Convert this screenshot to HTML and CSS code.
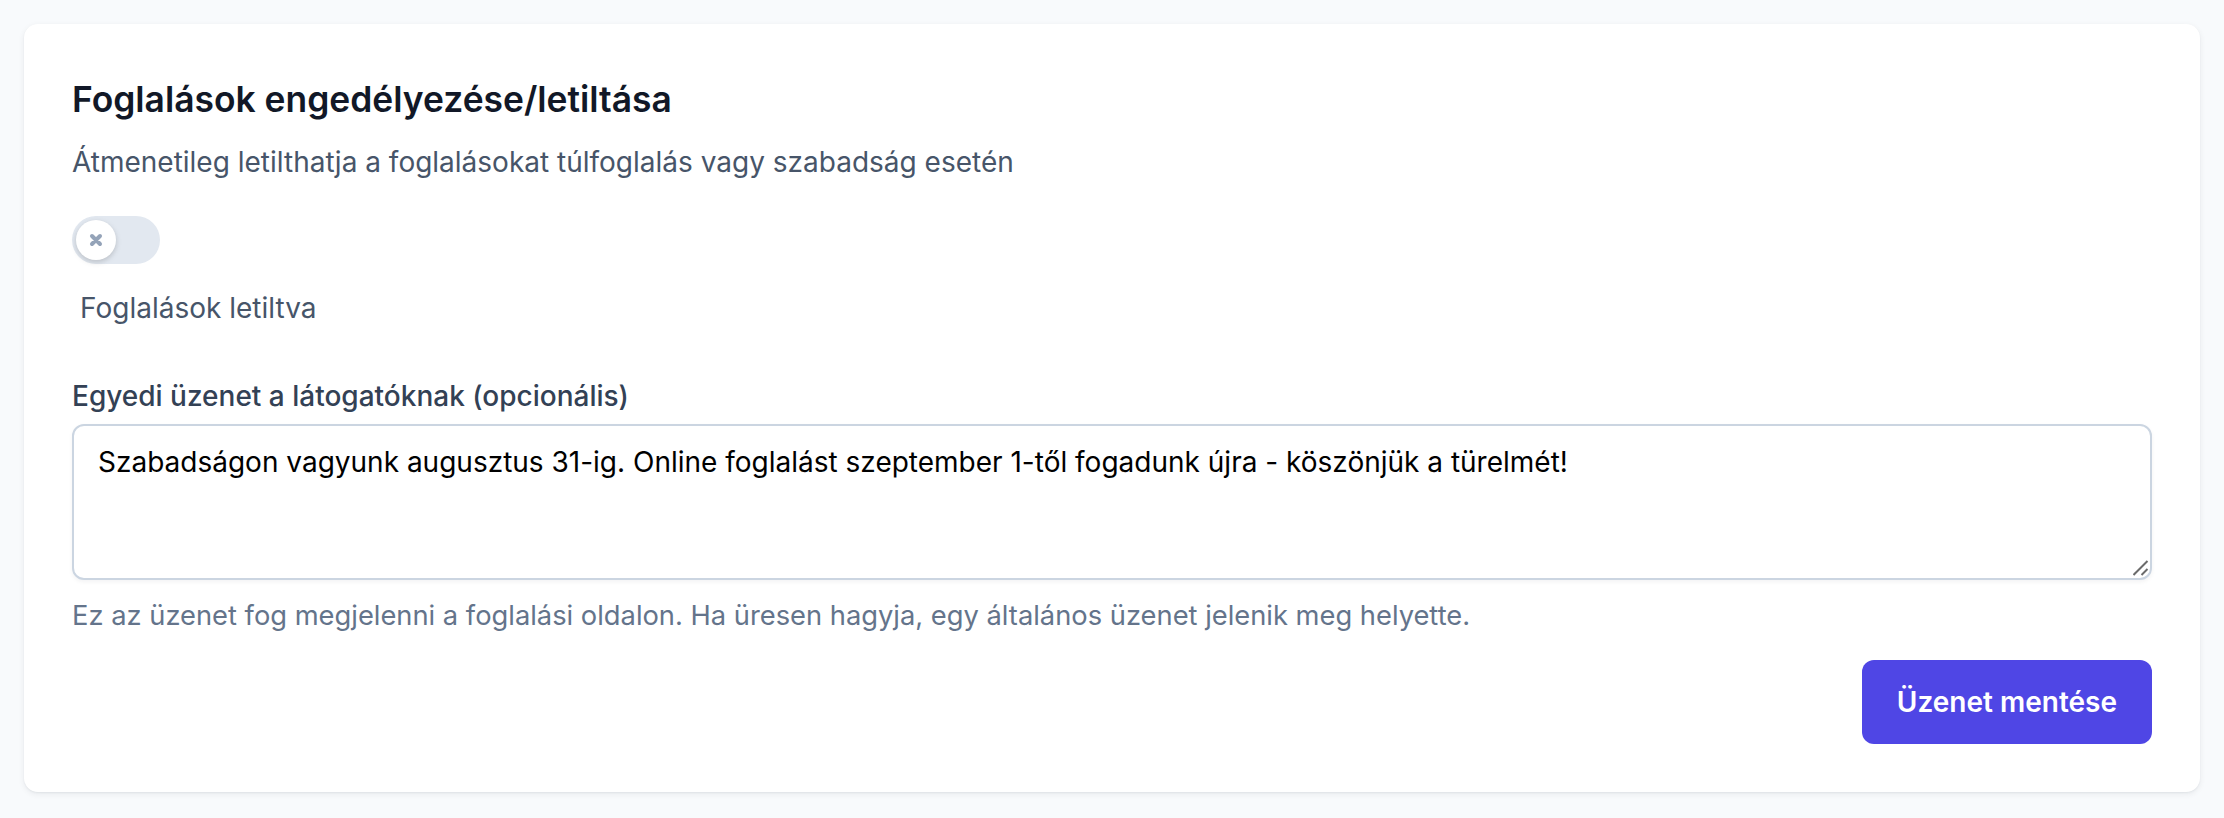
FILE: index.html
```html
<!DOCTYPE html>
<html lang="hu">
<head>
<meta charset="utf-8">
<title>Foglalások engedélyezése/letiltása</title>
<link rel="stylesheet" href="styles.css">
</head>
<body>
<main class="page">
  <section class="card">
    <h2 class="card-title">Foglalások engedélyezése/letiltása</h2>
    <p class="card-desc">Átmenetileg letilthatja a foglalásokat túlfoglalás vagy szabadság esetén</p>

    <div class="toggle-row">
      <button class="toggle" type="button" role="switch" aria-checked="false" aria-label="Foglalások engedélyezése">
        <span class="toggle-knob">
          <svg class="toggle-icon" viewBox="0 0 12 12" fill="none" aria-hidden="true">
            <path d="M4 8l2-2m0 0l2-2M6 6L4 4m2 2l2 2" stroke="currentColor" stroke-width="2" stroke-linecap="round" stroke-linejoin="round"/>
          </svg>
        </span>
      </button>
    </div>
    <p class="toggle-status">Foglalások letiltva</p>

    <div class="field">
      <label class="field-label" for="visitor-message">Egyedi üzenet a látogatóknak (opcionális)</label>
      <div class="textarea-wrap">
        <textarea id="visitor-message" class="field-input" rows="3">Szabadságon vagyunk augusztus 31-ig. Online foglalást szeptember 1-től fogadunk újra - köszönjük a türelmét!</textarea>
        <svg class="resize-grip" viewBox="0 0 16 16" aria-hidden="true">
          <path d="M0.5 15L14.5 1M8.5 15L14.5 9" stroke="#6b6b6b" stroke-width="2" fill="none"/>
        </svg>
      </div>
      <p class="field-help">Ez az üzenet fog megjelenni a foglalási oldalon. Ha üresen hagyja, egy általános üzenet jelenik meg helyette.</p>
    </div>

    <div class="actions">
      <button class="btn-primary" type="button">Üzenet mentése</button>
    </div>
  </section>
</main>
</body>
</html>
```

FILE: styles.css
```css
* {
  box-sizing: border-box;
}

html, body {
  margin: 0;
  padding: 0;
}

body {
  background: #f8fafc;
  font-family: "Inter", "Noto Sans", "Liberation Sans", sans-serif;
  color: #0f172a;
  -webkit-font-smoothing: antialiased;
}

.page {
  padding: 24px;
}

.card {
  background: #ffffff;
  border-radius: 14px;
  box-shadow: 0 2px 6px rgba(15, 23, 42, 0.07), 0 1px 2px rgba(15, 23, 42, 0.05);
  padding: 48px;
}

.card-title {
  margin: 0;
  font-size: 35.4px;
  line-height: 56px;
  font-weight: 600;
  color: #111827;
}

.card-desc {
  margin: 14px 0 0;
  font-size: 28px;
  line-height: 40px;
  color: #475569;
}

.toggle-row {
  margin-top: 34px;
  display: flex;
}

.toggle {
  display: flex;
  align-items: center;
  width: 88px;
  height: 48px;
  padding: 4px;
  border: none;
  border-radius: 24px;
  background: #e2e8f0;
  cursor: pointer;
}

.toggle-knob {
  display: flex;
  align-items: center;
  justify-content: center;
  width: 40px;
  height: 40px;
  border-radius: 50%;
  background: #ffffff;
  box-shadow: 0 2px 6px rgba(0, 0, 0, 0.12), 0 2px 4px rgba(0, 0, 0, 0.06);
  color: #94a3b8;
}

.toggle-icon {
  width: 24px;
  height: 24px;
}

.toggle-status {
  margin: 24px 0 0;
  padding-left: 8px;
  font-size: 28px;
  line-height: 40px;
  color: #475569;
}

.field {
  margin-top: 48px;
}

.field-label {
  display: block;
  font-size: 28px;
  line-height: 40px;
  font-weight: 500;
  color: #334155;
}

.textarea-wrap {
  position: relative;
  margin-top: 8px;
}

.field-input {
  display: block;
  width: 100%;
  height: 156px;
  margin: 0;
  padding: 16px 24px;
  border: 2px solid #cbd5e1;
  border-radius: 12px;
  background: #ffffff;
  box-shadow: 0 2px 4px rgba(15, 23, 42, 0.05);
  font-family: "Inter", "Noto Sans", "Liberation Sans", sans-serif;
  font-size: 28px;
  line-height: 40px;
  color: #000000;
  resize: none;
  outline: none;
  overflow: hidden;
}

.resize-grip {
  position: absolute;
  right: 3px;
  bottom: 4px;
  width: 16px;
  height: 16px;
  pointer-events: none;
}

.field-help {
  margin: 16px 0 0;
  font-size: 27.3px;
  line-height: 40px;
  color: #64748b;
}

.actions {
  margin-top: 24px;
  display: flex;
  justify-content: flex-end;
}

.btn-primary {
  padding: 22px 35px;
  border: none;
  border-radius: 12px;
  background: #4f46e5;
  color: #ffffff;
  font-family: "Inter", "Noto Sans", "Liberation Sans", sans-serif;
  font-size: 28px;
  line-height: 40px;
  font-weight: 600;
  cursor: pointer;
}
```
